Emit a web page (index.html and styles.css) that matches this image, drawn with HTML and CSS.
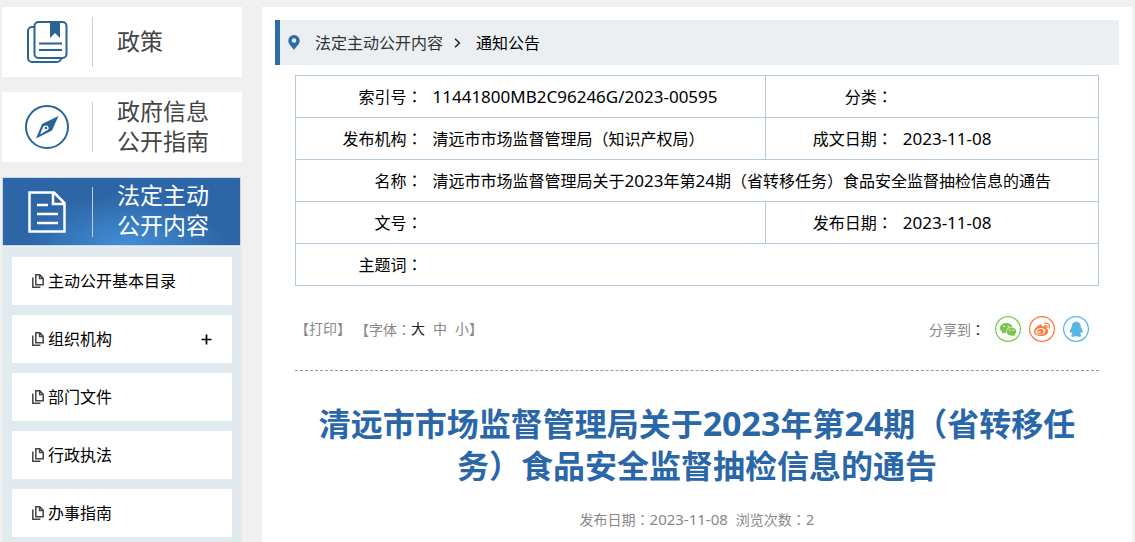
FILE: index.html
```html
<!DOCTYPE html>
<html lang="zh-CN">
<head>
<meta charset="utf-8">
<title>通知公告</title>
<link rel="stylesheet" href="styles.css">
</head>
<body>
<svg class="defs" aria-hidden="true">
  <symbol id="pages" viewBox="0 0 12 14">
    <path d="M3.8 .8h4l3.4 3.4v6.6H3.8zM7.6 .8v3.6h3.6M.8 3.5v9.7h7.6" fill="none" stroke="#444" stroke-width="1.5"/>
  </symbol>
</svg>
<div class="layout">
  <nav class="side">
    <a class="card" href="#">
      <span class="card-icon">
        <svg width="42" height="42" viewBox="0 0 42 42" fill="none" stroke="#2a6496" stroke-width="2">
          <path d="M8 6H6a4 4 0 0 0-4 4v27a4 4 0 0 0 4 4h25a4 4 0 0 0 4-4"/>
          <rect x="8.500" y="1" width="32" height="36" rx="4"/>
          <path d="M13 22.500h23M13 29h23"/>
          <path d="M24 1h10v16l-5-5-5 5z" fill="#2a6496" stroke="none"/>
        </svg>
      </span>
      <span class="card-text">政策</span>
    </a>
    <a class="card" href="#">
      <span class="card-icon">
        <svg width="44" height="44" viewBox="0 0 44 44">
          <circle cx="22" cy="22" r="21" fill="none" stroke="#2a6496" stroke-width="2"/>
          <path fill="#2a6496" fill-rule="evenodd" d="M33.500 11L17 19 11 33.500 27 25.500zM21.500 20.500a2.600 2.600 0 0 1 1.500 4.300L15 29.500 18.500 21z"/>
          <circle cx="21" cy="23" r="1.300" fill="#2a6496"/>
        </svg>
      </span>
      <span class="card-text">政府信息公开指南</span>
    </a>
    <a class="card active" href="#">
      <span class="card-icon">
        <svg width="38" height="42" viewBox="0 0 38 42" fill="none" stroke="#fff" stroke-width="2.500">
          <path d="M1.500 1.500H26L36.500 12v28.500h-35zM25 1.500V13h11.500M9 14h11M9 23h21M9 32h21"/>
        </svg>
      </span>
      <span class="card-text">法定主动公开内容</span>
    </a>
    <ul class="sub">
      <li><a href="#"><svg class="pg"><use href="#pages"/></svg>主动公开基本目录</a></li>
      <li><a href="#"><svg class="pg"><use href="#pages"/></svg>组织机构</a><button type="button" aria-label="展开组织机构"><svg width="11" height="11" viewBox="0 0 11 11"><path d="M5.500 .5v10M.5 5.500h10" stroke="#000" stroke-width="1.700"/></svg></button></li>
      <li><a href="#"><svg class="pg"><use href="#pages"/></svg>部门文件</a></li>
      <li><a href="#"><svg class="pg"><use href="#pages"/></svg>行政执法</a></li>
      <li><a href="#"><svg class="pg"><use href="#pages"/></svg>办事指南</a></li>
    </ul>
  </nav>
  <main class="main">
    <nav class="crumbs">
      <svg class="pin" viewBox="0 0 12 15"><path fill="#2d6da5" fill-rule="evenodd" d="M6 0a5.700 5.700 0 0 0-5.700 5.700C.3 9.500 4 11.500 6 15c2-3.500 5.700-5.500 5.700-9.300A5.700 5.700 0 0 0 6 0zm0 3.200a2.300 2.300 0 1 1 0 4.600 2.300 2.300 0 0 1 0-4.600z"/></svg>
      <a class="parent" href="#">法定主动公开内容</a>
      <svg class="chev" viewBox="0 0 7 10"><path d="M1 .8L5.400 5 1 9.200" fill="none" stroke="#222" stroke-width="1.500"/></svg>
      <a href="#">通知公告</a>
    </nav>
    <div class="article">
      <table class="info">
        <colgroup><col class="c-label"><col class="c-value"><col class="c-label"><col></colgroup>
        <tr><th scope="row">索引号<span class="colon" lang="zh-TW">：</span></th><td><span class="num">11441800MB2C96246G/2023-00595</span></td><th class="split" scope="row">分类<span class="colon" lang="zh-TW">：</span></th><td></td></tr>
        <tr><th scope="row">发布机构<span class="colon" lang="zh-TW">：</span></th><td>清远市市场监督管理局（知识产权局）</td><th class="split" scope="row">成文日期<span class="colon" lang="zh-TW">：</span></th><td><span class="num">2023-11-08</span></td></tr>
        <tr><th scope="row">名称<span class="colon" lang="zh-TW">：</span></th><td colspan="3">清远市市场监督管理局关于<span class="num">2023</span>年第<span class="num">24</span>期（省转移任务）食品安全监督抽检信息的通告</td></tr>
        <tr><th scope="row">文号<span class="colon" lang="zh-TW">：</span></th><td></td><th class="split" scope="row">发布日期<span class="colon" lang="zh-TW">：</span></th><td><span class="num">2023-11-08</span></td></tr>
        <tr><th scope="row">主题词<span class="colon" lang="zh-TW">：</span></th><td colspan="3"></td></tr>
      </table>
      <div class="tools">
        <div class="tool-left">
          <button type="button">【打印】</button>
          <div class="sizes"><span>【字体<span class="colon" lang="zh-TW">：</span></span><button class="on" type="button">大</button><button type="button">中</button><button type="button">小</button><span>】</span></div>
        </div>
        <div class="share">
          <span class="share-label">分享到<span class="colon dark" lang="zh-TW">：</span></span>
          <a href="#" aria-label="微信"><svg width="26" height="26" viewBox="0 0 26 26"><circle cx="13" cy="13" r="12.400" fill="none" stroke="#7bc549" stroke-width="1.200"/><path fill="#7bc549" d="M11.300 7C7.800 7 5 9.200 5 12c0 1.600.9 2.900 2.300 3.900L6.700 18l2.400-1.300c.8.200 1.500.3 2.300.3-.8-3.400 2-6.300 6-6.200C16.800 8.600 14.300 7 11.300 7z"/><path fill="#7bc549" d="M21.200 15.500c0-2.300-2.200-4.100-4.800-4.100s-4.700 1.800-4.700 4.100 2.100 4.200 4.700 4.200c.6 0 1.200-.1 1.800-.3l1.800 1-.5-1.700c1-.8 1.700-1.900 1.700-3.200z"/><g fill="#fff"><circle cx="9.200" cy="10.500" r=".8"/><circle cx="13.300" cy="10.500" r=".8"/><circle cx="14.900" cy="14.300" r=".7"/><circle cx="18.100" cy="14.300" r=".7"/></g></svg></a>
          <a href="#" aria-label="微博"><svg width="26" height="26" viewBox="0 0 26 26"><circle cx="13" cy="13" r="12.400" fill="none" stroke="#ff763b" stroke-width="1.200"/><path fill="#ff763b" fill-rule="evenodd" d="M17.300 13c-.6-.2-.5-.4-.3-.9.800-2-1-2.600-3.700-1.500-.5.200-.5 0-.4-.4.600-1.700-.7-2.200-2.500-1.300C8 10 5 13 5 15.500c0 2.800 3.300 4.500 6.700 4.500 4.400 0 7.500-2.500 7.500-4.600 0-1.300-.9-2-1.900-2.400zm-5.700 5.700c-2.700.2-5-1-5.100-2.800-.1-1.900 2-3.600 4.700-3.800s4.900 1 5.100 2.800c.1 1.800-2 3.500-4.700 3.800z"/><path fill="#ff763b" fill-rule="evenodd" d="M12.400 13.100c-2-.5-4.100.7-4.300 2.500-.2 1.500 1 2.600 2.900 2.600 2.100 0 3.600-1.300 3.600-2.800 0-1.200-.8-2-2.200-2.300zm-2 4c-.7 0-1.200-.4-1.100-1 0-.7.7-1.200 1.400-1.200s1.200.5 1.100 1.100-.7 1.100-1.400 1.100z"/><path d="M15.800 7.200c3-.5 5.400 2.100 4.500 5M16 9.700c1.500-.3 2.500.8 2.100 2.200" fill="none" stroke="#ff763b" stroke-width="1.300" stroke-linecap="round"/></svg></a>
          <a href="#" aria-label="QQ"><svg width="26" height="26" viewBox="0 0 26 26"><circle cx="13" cy="13" r="12.400" fill="none" stroke="#56b6e7" stroke-width="1.200"/><path fill="#56b6e7" d="M13.300 5.800c-3 0-4.700 2.300-4.500 5.200-1.200 1.600-2.300 3.800-1.800 5.800.3.800 1-.3 1.400-.9.200 1 .7 1.700 1.300 2.300-2.200.9-1.600 2.600.8 2.600 1.200 0 2.200-.3 2.800-.8.600.5 1.600.8 2.800.8 2.400 0 3-1.700.8-2.600.6-.6 1.100-1.300 1.300-2.300.4.600 1.100 1.700 1.400.9.500-2-.6-4.200-1.800-5.800.2-2.900-1.500-5.200-4.500-5.200z"/></svg></a>
        </div>
      </div>
      <h1>清远市市场监督管理局关于<span class="num">2023</span>年第<span class="num">24</span>期（省转移任务）食品安全监督抽检信息的通告</h1>
      <p class="meta"><span>发布日期<span class="colon" lang="zh-TW">：</span><span class="num">2023-11-08</span></span><span>浏览次数<span class="colon" lang="zh-TW">：</span><span class="num">2</span></span></p>
    </div>
  </main>
</div>
</body>
</html>
```
FILE: styles.css
```css
* { box-sizing: border-box; }
body {
  margin: 0;
  background: #f0f0f0;
  color: #000;
  font: 16px/24px "Noto Sans", "Noto Sans CJK SC", sans-serif;
}
a { color: inherit; text-decoration: none; }
button { padding: 0; border: 0; background: none; color: inherit; font: inherit; cursor: pointer; }
svg { display: block; flex: none; }
.defs { position: absolute; width: 0; height: 0; }
.colon { font-family: "Noto Sans CJK TC", sans-serif; }
.num { font-size: 17px; }

.layout { display: flex; gap: 20px; min-height: 100vh; padding: 7px 3px 0 2px; }

.side { flex: none; width: 240px; display: flex; flex-direction: column; }
.card {
  display: flex;
  align-items: center;
  height: 70px;
  margin-bottom: 15px;
  background: #fff;
  color: #444;
  font-size: 23px;
  line-height: 30px;
}
.card-icon {
  display: flex;
  align-items: center;
  justify-content: center;
  width: 91px;
  height: 50px;
  border-right: 1px solid #ccc;
}
.card-text { width: 96px; margin-left: 24px; padding-bottom: 3px; }
.card.active {
  margin: 0 1px 1px 0;
  height: 69px;
  border: 1px solid #c5d9ea;
  background: radial-gradient(ellipse 100px 50px at 52% 100%, #438ed6, #2c66a7);
  color: #fff;
}
.active .card-icon { width: 90px; padding-right: 2px; }

.sub {
  flex: 1;
  display: flex;
  flex-direction: column;
  gap: 10px;
  margin: 0;
  padding: 10px;
  background: #e0eaef;
  list-style: none;
}
.sub li {
  display: flex;
  align-items: center;
  justify-content: space-between;
  height: 48px;
  padding: 0 20px;
  background: #fff;
}
.sub a { display: flex; align-items: center; gap: 4px; }
.pg { width: 12px; height: 14px; }

.main { flex: 1; min-width: 0; padding: 13px; background: #fff; }
.crumbs {
  display: flex;
  align-items: center;
  height: 45px;
  padding-left: 8px;
  border-left: 5px solid #2d6da5;
  background: #ebeff2;
}
.pin { width: 12px; height: 15px; margin-right: 15px; }
.parent { color: #333; }
.chev { width: 7px; height: 10px; margin: 0 15px 0 11px; }

.article { padding: 10px 20px; }
.info { width: 100%; border-collapse: collapse; table-layout: fixed; border: 1px solid #b1cae0; }
.c-label { width: 133px; }
.c-value { width: 42%; }
.info tr { height: 42px; border-bottom: 1px solid #b1cae0; }
.info th { padding: 0 6px 0 0; font-weight: 400; text-align: right; }
.info td { padding: 0 4px; }
.info .split { border-left: 1px solid #b1cae0; }

.tools {
  display: flex;
  align-items: center;
  justify-content: space-between;
  height: 85px;
  padding: 2px 10px 0 0;
  border-bottom: 1px dashed #999;
  color: #888;
  font-size: 14px;
}
.tool-left, .share { display: flex; align-items: center; }
.tool-left { gap: 4px; }
.sizes { display: flex; }
.sizes button + button { margin-left: 8px; }
.sizes .on { color: #222; }
.share { gap: 8px; }
.share-label { margin-right: 2px; }
.dark { color: #222; }

h1 {
  margin: 31px 0 20px;
  color: #2a67a8;
  font-size: 32px;
  line-height: 42px;
  text-align: center;
}
h1 .num { font-size: 34px; }
.meta { display: flex; justify-content: center; gap: 8px; margin: 0; color: #888; font-size: 14px; }
.meta .num { font-size: 15px; }
```
